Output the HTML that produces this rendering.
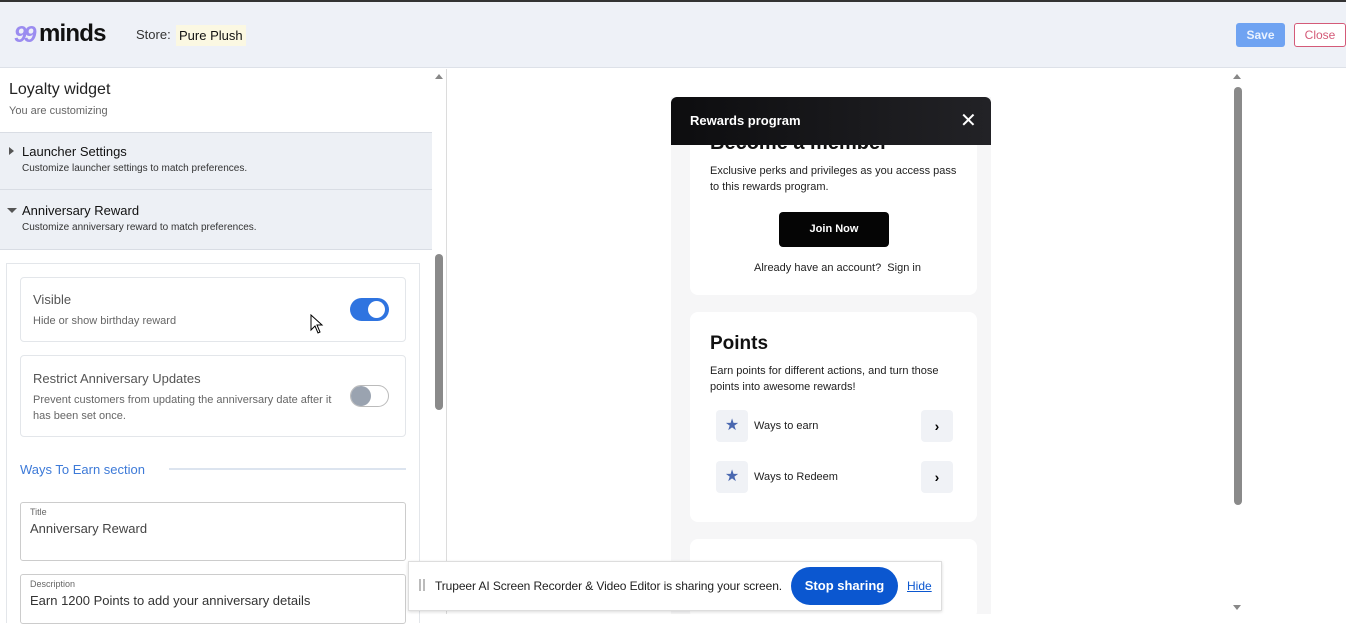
<!DOCTYPE html>
<html><head><style>
*{margin:0;padding:0;box-sizing:border-box}
body{width:1346px;height:614px;overflow:hidden;background:#fff;font-family:"Liberation Sans",sans-serif;position:relative}
.a{position:absolute}
</style></head><body>
<div class="a" style="left:0;top:0;width:1346px;height:2px;background:#333"></div>
<div class="a" style="left:0;top:2px;width:1346px;height:66px;background:#eef1f7;border-bottom:1px solid #dde1e8"></div>
<div class="a" style="left:14px;top:21px;font-size:23px;font-weight:bold;color:#9b8cf0;letter-spacing:-3px;font-style:italic">99</div>
<div class="a" style="left:39px;top:20px;font-size:24px;font-weight:bold;color:#111;letter-spacing:-0.8px">minds</div>
<div class="a" style="left:136px;top:27px;font-size:13px;color:#333">Store:</div>
<div class="a" style="left:176px;top:25px;padding:3px 3px;background:#fbf8e2;font-size:13px;color:#111">Pure Plush</div>
<div class="a" style="left:1236px;top:23px;width:49px;height:24px;background:#6fa3f2;border-radius:3px;color:#eaf2ff;font-size:12px;font-weight:bold;text-align:center;line-height:24px">Save</div>
<div class="a" style="left:1294px;top:23px;width:52px;height:24px;border:1px solid #d45a78;border-radius:3px;color:#d45a78;font-size:12px;text-align:center;line-height:22px;background:#fff">Close</div>

<div class="a" style="left:9px;top:81px;font-size:16px;color:#222">Loyalty widget</div>
<div class="a" style="left:9px;top:105px;font-size:11px;color:#666">You are customizing</div>
<div class="a" style="left:0;top:132px;width:432px;height:118px;background:#edf0f5;border-top:1px solid #d9dde4"></div>
<div class="a" style="left:0;top:189px;width:432px;height:1px;background:#d9dde4"></div>
<div class="a" style="left:0;top:249px;width:432px;height:1px;background:#d9dde4"></div>
<div class="a" style="left:9px;top:147px;width:0;height:0;border-left:5px solid #555;border-top:4px solid transparent;border-bottom:4px solid transparent"></div>
<div class="a" style="left:22px;top:144px;font-size:13px;color:#111">Launcher Settings</div>
<div class="a" style="left:22px;top:163px;font-size:10px;color:#333">Customize launcher settings to match preferences.</div>
<div class="a" style="left:7px;top:208px;width:0;height:0;border-top:5px solid #555;border-left:5px solid transparent;border-right:5px solid transparent"></div>
<div class="a" style="left:22px;top:203px;font-size:13px;color:#111">Anniversary Reward</div>
<div class="a" style="left:22px;top:222px;font-size:10px;color:#333">Customize anniversary reward to match preferences.</div>

<div class="a" style="left:6px;top:263px;width:414px;height:360px;border:1px solid #e3e6ea;border-bottom:none"></div>
<div class="a" style="left:20px;top:277px;width:386px;height:65px;border:1px solid #e3e6ea;border-radius:4px"></div>
<div class="a" style="left:33px;top:292px;font-size:13px;color:#555">Visible</div>
<div class="a" style="left:33px;top:315px;font-size:11px;color:#666">Hide or show birthday reward</div>
<div class="a" style="left:350px;top:298px;width:39px;height:23px;border-radius:12px;background:#2f74e0"></div>
<div class="a" style="left:368px;top:301px;width:17px;height:17px;border-radius:50%;background:#fff"></div>
<svg class="a" style="left:310px;top:314px" width="14" height="20" viewBox="0 0 14 20"><path d="M1 1 L1 16 L5 12 L8 19 L10 18 L7 11 L12 11 Z" fill="#fff" stroke="#000" stroke-width="1"/></svg>
<div class="a" style="left:20px;top:355px;width:386px;height:82px;border:1px solid #e3e6ea;border-radius:4px"></div>
<div class="a" style="left:33px;top:371px;font-size:13px;color:#555">Restrict Anniversary Updates</div>
<div class="a" style="left:33px;top:392px;font-size:11px;color:#666;line-height:16px;width:310px">Prevent customers from updating the anniversary date after it has been set once.</div>
<div class="a" style="left:350px;top:385px;width:39px;height:22px;border-radius:11px;border:1px solid #bbb;background:#fff"></div>
<div class="a" style="left:351px;top:386px;width:20px;height:20px;border-radius:50%;background:#9aa3b0"></div>
<div class="a" style="left:20px;top:462px;font-size:13px;color:#3d7ad8">Ways To Earn section</div>
<div class="a" style="left:169px;top:468px;width:237px;height:2px;background:#dce4ef"></div>
<div class="a" style="left:20px;top:502px;width:386px;height:59px;border:1px solid #ccc;border-radius:3px"></div>
<div class="a" style="left:30px;top:507px;font-size:9px;color:#666">Title</div>
<div class="a" style="left:30px;top:521px;font-size:13px;color:#444">Anniversary Reward</div>
<div class="a" style="left:20px;top:574px;width:386px;height:50px;border:1px solid #ccc;border-radius:3px"></div>
<div class="a" style="left:30px;top:579px;font-size:9px;color:#666">Description</div>
<div class="a" style="left:30px;top:593px;font-size:13px;color:#333">Earn 1200 Points to add your anniversary details</div>

<div class="a" style="left:432px;top:69px;width:15px;height:545px;background:#fff;border-right:1px solid #dcdcdc"></div>
<div class="a" style="left:435px;top:74px;width:0;height:0;border-bottom:5px solid #888;border-left:4px solid transparent;border-right:4px solid transparent"></div>
<div class="a" style="left:435px;top:254px;width:8px;height:156px;border-radius:4px;background:#8a8a8a"></div>

<div class="a" style="left:671px;top:97px;width:320px;height:517px;background:#f6f6f7"></div>
<div class="a" style="left:690px;top:130px;width:287px;height:165px;background:#fff;border-radius:8px"></div>
<div class="a" style="left:710px;top:132px;font-size:20px;font-weight:bold;color:#111">Become a member</div>
<div class="a" style="left:671px;top:97px;width:320px;height:48px;background:linear-gradient(90deg,#0d0d0f,#222226);border-radius:6px 6px 0 0"></div>
<div class="a" style="left:690px;top:113px;font-size:13px;font-weight:bold;color:#fff">Rewards program</div>
<div class="a" style="left:960px;top:108px;font-size:20px;color:#fff">✕</div>
<div class="a" style="left:710px;top:163px;font-size:11px;color:#222;line-height:16px;width:250px">Exclusive perks and privileges as you access pass to this rewards program.</div>
<div class="a" style="left:779px;top:212px;width:110px;height:35px;background:#050505;border-radius:4px;color:#fff;font-size:11px;font-weight:bold;text-align:center;line-height:35px">Join Now</div>
<div class="a" style="left:754px;top:262px;font-size:11px;color:#222">Already have an account?&nbsp; Sign in</div>

<div class="a" style="left:690px;top:312px;width:287px;height:210px;background:#fff;border-radius:8px"></div>
<div class="a" style="left:710px;top:333px;font-size:19px;font-weight:bold;color:#111">Points</div>
<div class="a" style="left:710px;top:363px;font-size:11px;color:#222;line-height:16px;width:240px">Earn points for different actions, and turn those points into awesome rewards!</div>
<div class="a" style="left:716px;top:410px;width:32px;height:32px;background:#f0f2f6;border-radius:4px;color:#4a68b0;font-size:16px;text-align:center;line-height:32px">★</div>
<div class="a" style="left:754px;top:420px;font-size:11px;color:#222">Ways to earn</div>
<div class="a" style="left:921px;top:410px;width:32px;height:32px;background:#f0f2f6;border-radius:4px;font-size:14px;font-weight:bold;text-align:center;line-height:32px">›</div>
<div class="a" style="left:716px;top:461px;width:32px;height:32px;background:#f0f2f6;border-radius:4px;color:#4a68b0;font-size:16px;text-align:center;line-height:32px">★</div>
<div class="a" style="left:754px;top:471px;font-size:11px;color:#222">Ways to Redeem</div>
<div class="a" style="left:921px;top:461px;width:32px;height:32px;background:#f0f2f6;border-radius:4px;font-size:14px;font-weight:bold;text-align:center;line-height:32px">›</div>
<div class="a" style="left:690px;top:539px;width:287px;height:80px;background:#fff;border-radius:8px"></div>
<div class="a" style="left:710px;top:560px;font-size:19px;font-weight:bold;color:#eee">Store Credits</div>

<div class="a" style="left:1233px;top:74px;width:0;height:0;border-bottom:5px solid #888;border-left:4px solid transparent;border-right:4px solid transparent"></div>
<div class="a" style="left:1234px;top:87px;width:8px;height:418px;border-radius:4px;background:#8a8a8a"></div>
<div class="a" style="left:1233px;top:605px;width:0;height:0;border-top:5px solid #888;border-left:4px solid transparent;border-right:4px solid transparent"></div>

<div class="a" style="left:408px;top:561px;width:534px;height:50px;background:#fff;border:1px solid #ddd;box-shadow:0 1px 3px rgba(0,0,0,.15)"></div>
<div class="a" style="left:419px;top:579px;width:2px;height:12px;background:#bbb"></div>
<div class="a" style="left:423px;top:579px;width:2px;height:12px;background:#bbb"></div>
<div class="a" style="left:435px;top:579px;font-size:12px;color:#222;letter-spacing:-0.1px">Trupeer AI Screen Recorder &amp; Video Editor is sharing your screen.</div>
<div class="a" style="left:791px;top:567px;width:107px;height:38px;background:#0b57d0;border-radius:19px;color:#fff;font-size:13px;font-weight:bold;text-align:center;line-height:38px">Stop sharing</div>
<div class="a" style="left:907px;top:579px;font-size:12px;color:#0b57d0;text-decoration:underline">Hide</div>
</body></html>
